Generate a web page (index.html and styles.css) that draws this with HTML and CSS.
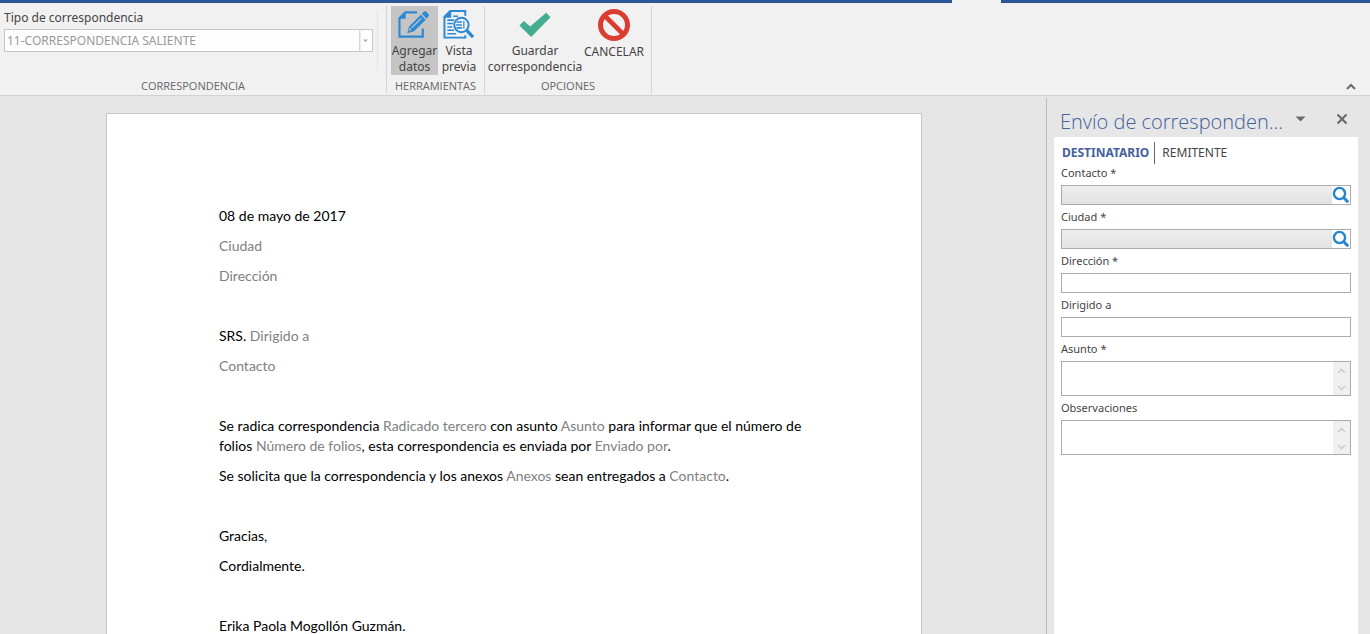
FILE: index.html
```html
<!DOCTYPE html>
<html lang="es">
<head>
<meta charset="utf-8">
<title>Envío de correspondencia</title>
<link rel="stylesheet" href="styles.css">
</head>
<body>
<div class="app">
  <div class="tabline"><span class="tabline-bar"></span><span class="tabline-gap"></span><span class="tabline-bar"></span></div>
  <header class="ribbon">
    <section class="group group-type">
      <div class="group-body type-body">
        <div class="type-field">
          <label for="tipo">Tipo de correspondencia</label>
          <div class="combo">
            <select id="tipo" disabled><option>11-CORRESPONDENCIA SALIENTE</option></select>
            <svg class="combo-arrow" viewBox="0 0 13 22" aria-hidden="true"><path d="M0.5 0V22" stroke="#c6c6c6"/><path d="M4 10h5L6.500 12.800z" fill="#b0b0b0"/></svg>
          </div>
        </div>
      </div>
      <h2 class="group-title">CORRESPONDENCIA</h2>
    </section>
    <section class="group">
      <div class="group-body">
        <button class="tool tool-active" type="button">
          <svg width="34" height="34" viewBox="2 0 34 34" aria-hidden="true">
            <path d="M21 4.500H9L3 10.500V29.500H27V21" fill="none" stroke="#2b88d4" stroke-width="2.200"/>
            <path d="M2 11L9.500 3.500V11z" fill="#2b88d4"/>
            <path d="M11 26L13 19L25 7L30 12L18 24z" fill="#2b88d4"/>
            <path d="M26 6L28.300 3.700Q29.300 2.800 30.300 3.700L33 6.400Q34 7.500 33 8.500L31 11z" fill="#2b88d4"/>
            <path d="M15.500 20.500L25.500 10.500M13.500 23.500L14.300 20.800" fill="none" stroke="#c5c5c5" stroke-width="1.300"/>
          </svg>
          <span>Agregar<br>datos</span>
        </button>
        <button class="tool tool-preview" type="button">
          <svg width="34" height="34" viewBox="1 0 34 34" aria-hidden="true">
            <path d="M24.500 8V3H9L3 9V30.500H24.500V28" fill="none" stroke="#2b88d4" stroke-width="2"/>
            <path d="M2 10L10 2V10z" fill="#2b88d4"/>
            <path d="M12 8.500H17M6 12.500H13M6 16H12M6 19.500H11M6 23H13M6 26.500H15" stroke="#2b88d4" stroke-width="1.600"/>
            <circle cx="20.500" cy="17.500" r="7.400" fill="#f1f1f1" stroke="#2b88d4" stroke-width="2"/>
            <path d="M15.500 14.500H21M15 17.500H21M15.500 20.500H21" stroke="#2b88d4" stroke-width="1.600"/>
            <path d="M23 13.500V21.500" stroke="#2b88d4" stroke-width="1.200"/>
            <path d="M26 23L32.500 30" stroke="#2b88d4" stroke-width="3.400"/>
          </svg>
          <span>Vista<br>previa</span>
        </button>
      </div>
      <h2 class="group-title">HERRAMIENTAS</h2>
    </section>
    <section class="group">
      <div class="group-body">
        <button class="tool tool-save" type="button">
          <svg width="34" height="34" viewBox="0 0 34 34" aria-hidden="true"><path d="M1 18L5.500 13.500L12 19L28.500 5L33 9.500L13 30z" fill="#43ac91"/></svg>
          <span>Guardar<br>correspondencia</span>
        </button>
        <button class="tool tool-cancel" type="button">
          <svg width="34" height="34" viewBox="0 0 34 34" aria-hidden="true"><circle cx="17" cy="17" r="13.500" fill="none" stroke="#db3c30" stroke-width="5"/><path d="M7.500 7.500L26.500 26.500" stroke="#db3c30" stroke-width="4.600"/></svg>
          <span>CANCELAR</span>
        </button>
      </div>
      <h2 class="group-title">OPCIONES</h2>
    </section>
    <button class="collapse" type="button" aria-label="Contraer la cinta"><svg width="10" height="8" viewBox="0 0 10 8"><path d="M1 6L5 2L9 6" fill="none" stroke="#6a6a6a" stroke-width="2"/></svg></button>
  </header>

  <div class="workspace">
    <main class="canvas">
      <article class="page">
        <p>08 de mayo de 2017</p>
        <p><span class="ph">Ciudad</span></p>
        <p><span class="ph">Dirección</span></p>
        <p>&nbsp;</p>
        <p>SRS. <span class="ph">Dirigido a</span></p>
        <p><span class="ph">Contacto</span></p>
        <p>&nbsp;</p>
        <p>Se radica correspondencia <span class="ph">Radicado tercero</span> con asunto <span class="ph">Asunto</span> para informar que el número de folios <span class="ph">Número de folios</span>, esta correspondencia es enviada por <span class="ph">Enviado por</span>.</p>
        <p>Se solicita que la correspondencia y los anexos <span class="ph">Anexos</span> sean entregados a <span class="ph">Contacto</span>.</p>
        <p>&nbsp;</p>
        <p>Gracias,</p>
        <p>Cordialmente.</p>
        <p>&nbsp;</p>
        <p>Erika Paola Mogollón Guzmán.</p>
      </article>
    </main>

    <aside class="pane">
      <div class="pane-head">
        <h1>Envío de corresponden...</h1>
        <button type="button" aria-label="Opciones del panel"><svg width="11" height="6" viewBox="0 0 11 6"><path d="M0.500 0.500h10L5.500 5.500z" fill="#6a6a6a"/></svg></button>
        <button class="pane-close" type="button" aria-label="Cerrar"><svg width="12" height="12" viewBox="0 0 12 12"><path d="M1.500 1.500L10.500 10.500M10.500 1.500L1.500 10.500" stroke="#6a6a6a" stroke-width="2.200"/></svg></button>
      </div>
      <form class="form">
        <nav class="tabs">
          <a class="tab tab-current" href="#destinatario">DESTINATARIO</a>
          <a class="tab" href="#remitente">REMITENTE</a>
        </nav>
        <div class="field">
          <label for="contacto">Contacto *</label>
          <div class="box box-search">
            <input id="contacto" type="text" readonly>
            <button type="button" aria-label="Buscar contacto"><svg width="18" height="18" viewBox="0 0 18 18"><circle cx="7.500" cy="7.500" r="5.600" fill="none" stroke="#2484cf" stroke-width="2.400"/><path d="M11.500 11.500L16.200 16.200" stroke="#2484cf" stroke-width="3"/></svg></button>
          </div>
        </div>
        <div class="field">
          <label for="ciudad">Ciudad *</label>
          <div class="box box-search">
            <input id="ciudad" type="text" readonly>
            <button type="button" aria-label="Buscar ciudad"><svg width="18" height="18" viewBox="0 0 18 18"><circle cx="7.500" cy="7.500" r="5.600" fill="none" stroke="#2484cf" stroke-width="2.400"/><path d="M11.500 11.500L16.200 16.200" stroke="#2484cf" stroke-width="3"/></svg></button>
          </div>
        </div>
        <div class="field">
          <label for="direccion">Dirección *</label>
          <div class="box"><input id="direccion" type="text"></div>
        </div>
        <div class="field">
          <label for="dirigido">Dirigido a</label>
          <div class="box"><input id="dirigido" type="text"></div>
        </div>
        <div class="field">
          <label for="asunto">Asunto *</label>
          <div class="box box-area">
            <textarea id="asunto"></textarea>
            <svg class="rail" width="17" height="33" viewBox="0 0 17 33" aria-hidden="true"><path d="M5 11L8.500 7.500L12 11M5 24L8.500 27.500L12 24" fill="none" stroke="#cdcdcd" stroke-width="1.600"/></svg>
          </div>
        </div>
        <div class="field">
          <label for="observaciones">Observaciones</label>
          <div class="box box-area">
            <textarea id="observaciones"></textarea>
            <svg class="rail" width="17" height="33" viewBox="0 0 17 33" aria-hidden="true"><path d="M5 11L8.500 7.500L12 11M5 24L8.500 27.500L12 24" fill="none" stroke="#cdcdcd" stroke-width="1.600"/></svg>
          </div>
        </div>
      </form>
    </aside>
  </div>
</div>
</body>
</html>
```
FILE: styles.css
```css
* { box-sizing: border-box; }

body {
  margin: 0;
  background: #e6e6e6;
  color: #444;
  font-family: "Noto Sans", "Open Sans", sans-serif;
  font-size: 12px;
  line-height: 16px;
}

button, input, select, textarea {
  margin: 0;
  padding: 0;
  border: 0;
  background: none;
  color: inherit;
  font: inherit;
}

svg { display: block; }

.app {
  display: flex;
  flex-direction: column;
  height: 100vh;
  overflow: hidden;
}

/* Ribbon */
.tabline {
  display: grid;
  grid-template-columns: 952fr 49px 369fr;
  flex: none;
  height: 3px;
  background: #f1f1f1;
}
.tabline-bar { background: #2b579a; }

.ribbon {
  display: flex;
  flex: none;
  padding: 3px 0 2px;
  border-bottom: 1px solid #d2d2d2;
  background: #f1f1f1;
}
.group {
  display: flex;
  flex-direction: column;
  padding: 0 4px;
  border-right: 1px solid #d4d4d4;
}
.group-body {
  display: flex;
  height: 69px;
}
.group-title {
  margin: 4px 0 0;
  color: #666;
  font-family: "Open Sans", sans-serif;
  font-size: 11px;
  font-weight: 400;
  line-height: 14px;
  text-align: center;
}
.group-type { width: 387px; }
.type-body { padding: 4px 4px 4px 0; }
.type-field {
  flex: 1;
  padding-right: 4px;
  border-right: 1px solid #e3e3e3;
}
.type-field label {
  display: block;
  margin-bottom: 3px;
}
.combo {
  position: relative;
  height: 23px;
  border: 1px solid #c6c6c6;
  background: #fdfdfd;
}
.combo select {
  width: 100%;
  height: 100%;
  padding: 0 15px 0 2px;
  appearance: none;
  color: #999;
  opacity: 1;
}
.combo-arrow {
  position: absolute;
  top: 0;
  right: 0;
  width: 13px;
  height: 100%;
  pointer-events: none;
}

.tool {
  display: flex;
  flex-direction: column;
  align-items: center;
  padding-top: 2px;
  text-align: center;
  white-space: nowrap;
}
.tool span { margin-top: 2px; }
.tool-active {
  width: 47px;
  background: #c5c5c5;
}
.tool-preview { width: 42px; }
.tool-save { width: 92px; }
.tool-cancel { width: 66px; }

.collapse {
  align-self: flex-end;
  margin: 0 14px 2px auto;
}

/* Document */
.workspace {
  display: flex;
  flex: 1;
  min-height: 0;
}
.canvas {
  display: flex;
  flex: 1;
  justify-content: center;
  padding: 17px 18px 0 0;
  overflow: hidden;
}
.page {
  flex: 0 1 816px;
  height: 1056px;
  padding: 92px 112px;
  border: 1px solid #c6c6c6;
  background: #fff;
  color: #000;
  font-family: Lato, sans-serif;
  font-size: 14px;
  line-height: 20px;
}
.page p { margin: 0 0 10px; }
.ph { color: #808080; }

/* Task pane */
.pane {
  display: flex;
  flex: 0 0 324px;
  flex-direction: column;
  margin-top: 2px;
  padding: 0 12px 0 7px;
  border-left: 1px solid #bcbcbc;
}
.pane-head {
  display: flex;
  align-items: center;
  height: 39px;
  padding: 8px 10px 0 6px;
}
.pane-head h1 {
  flex: 1;
  margin: 0;
  color: #44619d;
  font-family: "Open Sans", sans-serif;
  font-size: 20px;
  font-weight: 300;
  line-height: 28px;
  white-space: nowrap;
}
.pane-head button { margin-bottom: 6px; }
.pane-head .pane-close { margin-left: 30px; }

.form {
  flex: 1;
  padding: 5px 7px 0;
  background: #fff;
}
.tabs {
  display: flex;
  margin-bottom: 1px;
}
.tab {
  padding: 2px 6px 2px 7px;
  color: #444;
  line-height: 18px;
  text-decoration: none;
}
.tab-current {
  padding-right: 5px;
  padding-left: 1px;
  border-right: 1px solid #666;
  color: #44619d;
  font-weight: 700;
}
.field { margin-bottom: 4px; }
.field label {
  display: block;
  margin-bottom: 4px;
  font-size: 11px;
}
.box {
  display: flex;
  height: 20px;
  border: 1px solid #ababab;
  background: #fff;
}
.box input, .box textarea {
  flex: 1;
  min-width: 0;
  padding: 0 3px;
  resize: none;
}
.box-search input { background: linear-gradient(#eee, #e2e2e2); }
.box-area { height: 35px; }
.rail {
  flex: none;
  background: #f0f0f0;
}
```
